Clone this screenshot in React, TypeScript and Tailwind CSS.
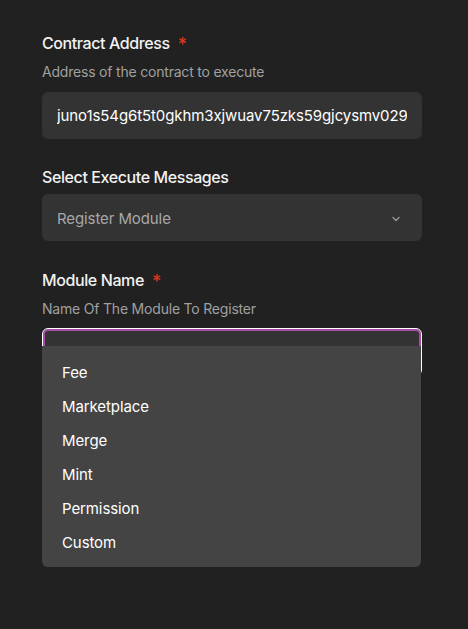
const font = { fontFamily: "Inter, 'Noto Sans', sans-serif" };

const modules = ["Fee", "Marketplace", "Merge", "Mint", "Permission", "Custom"];

const Label = ({ text, required }: { text: string; required?: boolean }) => (
  <div className="flex items-center gap-2 text-[16px] font-medium leading-6 text-[#f2f2f2] tracking-[-0.4px]">
    <span>{text}</span>
    {required && <span className="text-[#d9361f] text-[18px] leading-none mt-[3px]">*</span>}
  </div>
);

const App = () => {
  return (
    <main className="min-h-[629px] w-full bg-[#212121] px-[42px] pt-[31px]" style={font}>
      <div className="w-[380px] flex flex-col">
        <Label text="Contract Address" required />
        <p className="mt-[7px] text-[14px] leading-5 text-[#a0a0a0] tracking-[-0.2px]">Address of the contract to execute</p>
        <input
          readOnly
          value="juno1s54g6t5t0gkhm3xjwuav75zks59gjcysmv029u8qwerty"
          className="mt-[10px] h-[47px] w-full rounded-md bg-[#333333] px-[15px] text-[15px] text-white tracking-[-0.1px] outline-none"
        />

        <div className="mt-[26px]">
          <Label text="Select Execute Messages" />
        </div>
        <div className="mt-[5px] h-[47px] rounded-md bg-[#333333] flex items-center justify-between px-[15px] pt-[3px]">
          <span className="text-[15px] text-[#a8a8a8] tracking-[-0.1px]">Register Module</span>
          <svg width="12" height="12" viewBox="0 0 12 12" className="mr-[5px]">
            <path d="M3 4.5 L6 7.5 L9 4.5" fill="none" stroke="#9a9a9a" strokeWidth="1.3" strokeLinecap="round" strokeLinejoin="round" />
          </svg>
        </div>

        <div className="mt-[27px]">
          <Label text="Module Name" required />
        </div>
        <p className="mt-[7px] text-[14px] leading-5 text-[#a0a0a0] tracking-[-0.2px]">Name Of The Module To Register</p>
        <div className="relative mt-[9px]">
          <div className="h-[48px] rounded-md bg-[#333333] border border-white shadow-[inset_0_0_0_2px_#a64ca6]" />
          <ul className="absolute left-0 right-[1px] top-[18px] rounded-b-md bg-[#444444] pt-[10px] pb-[7px]">
            {modules.map((m) => (
              <li key={m} className="h-[34px] flex items-center px-[20px] text-[15px] text-white tracking-[-0.1px]">
                {m}
              </li>
            ))}
          </ul>
        </div>
      </div>
    </main>
  );
};

export default App;
